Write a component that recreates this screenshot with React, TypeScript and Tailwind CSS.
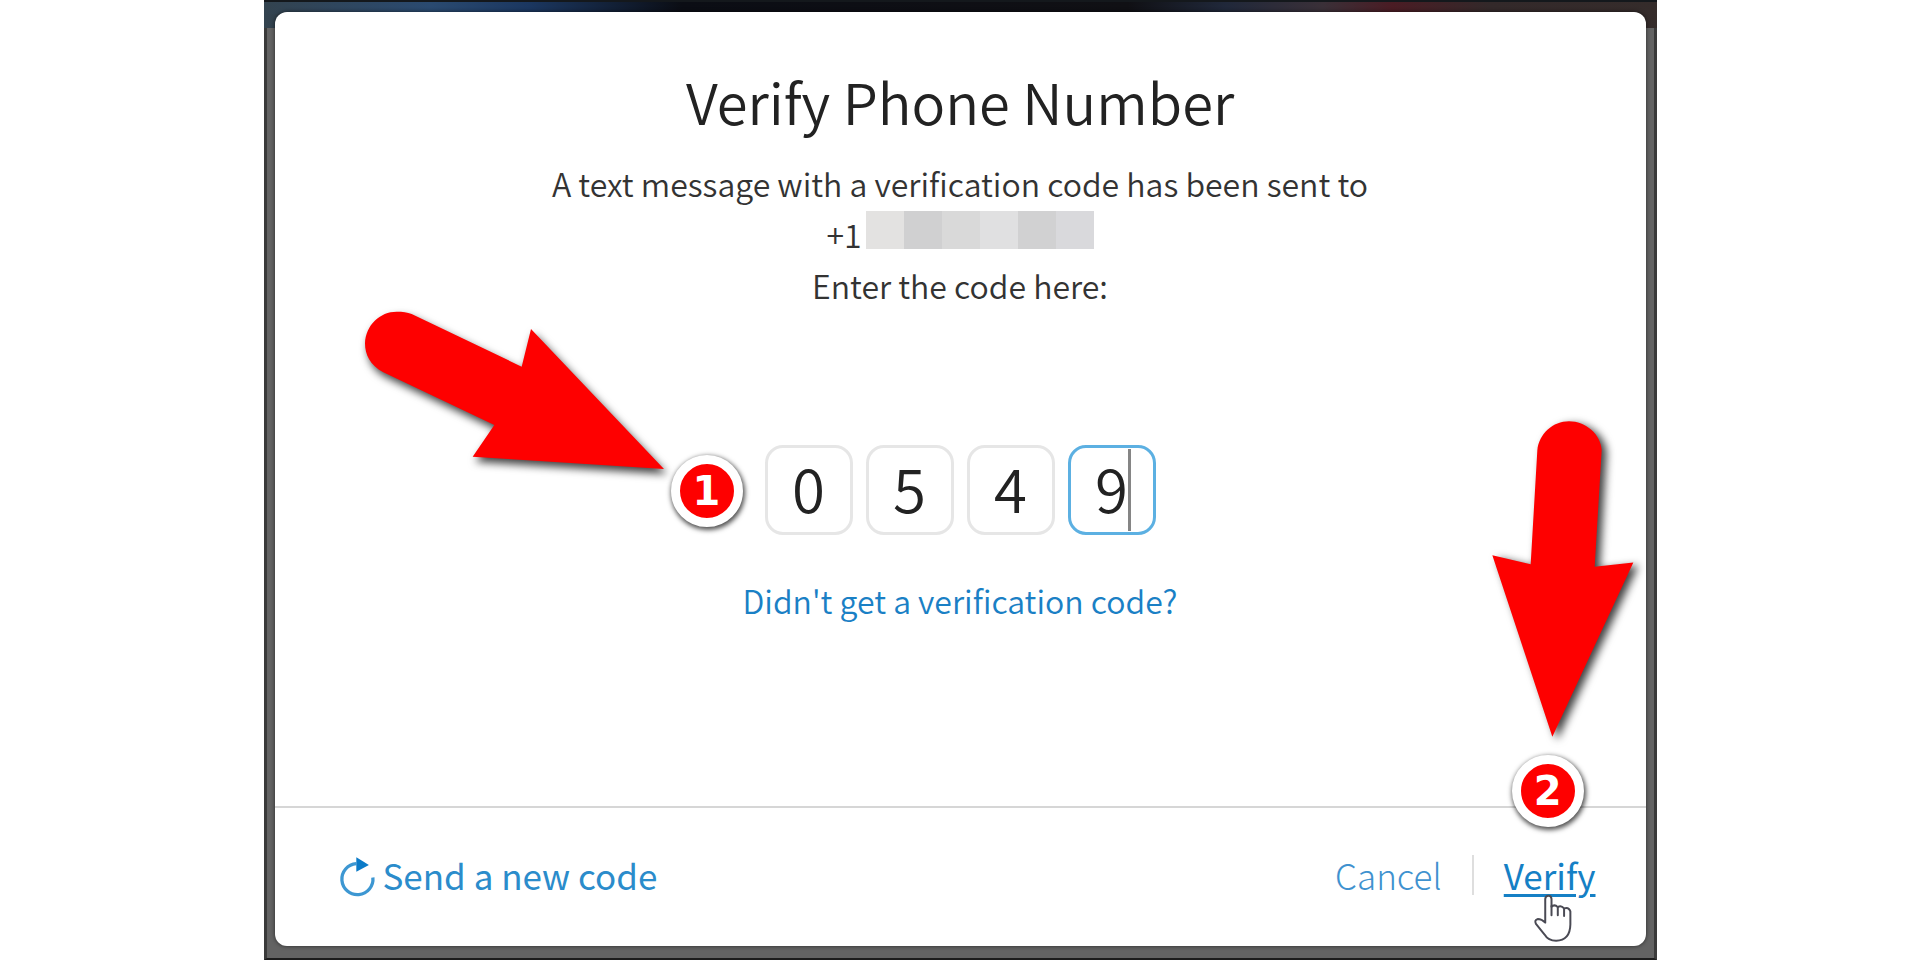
import React, { useState } from "react";

const MASK_COLORS = [
    "bg-[#e3e2e1]",
    "bg-[#d0d0d1]",
    "bg-[#d9d9d9]",
    "bg-[#e0e0e1]",
    "bg-[#d1d1d2]",
    "bg-[#d9d9dc]",
];

export default function App() {
    const [code, setCode] = useState(["0", "5", "4", "9"]);

    const handleChange = (index: number, value: string) => {
        setCode(code.map((digit, i) => (i === index ? value : digit)));
    };

    return (
        <div className="min-h-screen bg-white flex justify-center font-['Noto_Sans_CJK_SC','Open_Sans',sans-serif]">
            {/* Dimmed page behind the dialog */}
            <div className="relative w-full max-w-[1393px] flex flex-col px-2 pt-3 pb-3 bg-[#636363] border-x-3 border-b-2 border-x-[#3a3a3a] border-b-[#1c1c1c]">
                <div className="absolute -inset-x-[3px] top-0 h-7 border-t-2 border-[#14181c] bg-linear-to-r from-[#33434f] via-[#0d0f14] to-[#352c2b]">
                    <div className="h-3 bg-[linear-gradient(90deg,#33434f_0%,#2a4a70_12%,#1b3760_19%,#0b0d14_30%,#101014_62%,#20283a_69%,#3a3038_76%,#4a1c24_81%,#33292a_88%,#352c2b_100%)]" />
                </div>

                <div
                    role="dialog"
                    aria-labelledby="dialog-title"
                    className="relative flex-1 flex flex-col bg-white rounded-xl shadow-[0_0_4px_rgba(0,0,0,0.6)]">
                    <main className="flex-1 flex flex-col items-center pt-[53px] text-center">
                        <h1
                            id="dialog-title"
                            className="text-[56px] leading-[72px] font-[350] text-[#222]">
                            Verify Phone Number
                        </h1>
                        <div className="mt-[21px] text-[32px] leading-[51px] font-[350] text-[#333]">
                            <p>
                                A text message with a verification code has been
                                sent to
                            </p>
                            <p className="flex justify-center gap-1">
                                +1
                                <MaskedNumber />
                            </p>
                            <p>Enter the code here:</p>
                        </div>

                        <div className="relative mt-[134px] flex gap-[13px]">
                            {code.map((digit, i) => (
                                <CodeBox
                                    key={i}
                                    index={i}
                                    value={digit}
                                    active={i === 3}
                                    onChange={handleChange}
                                />
                            ))}
                            <svg
                                viewBox="0 0 1260 780"
                                className="absolute -left-[415px] -top-[155px] w-[420px] h-[260px] max-w-none overflow-visible pointer-events-none drop-shadow-[3px_5px_4px_rgba(0,0,0,0.75)]">
                                <path
                                    d="M185 72 L515 230 L543 117 L942 537 L368 500 L433 405 L100 247 C60 226 45 194 45 160 C47 105 90 65 140 65 C158 65 172 66 185 72Z"
                                    fill="#fe0000"
                                />
                            </svg>
                            <StepBadge
                                step={1}
                                className="-left-[94px] top-[10px]"
                            />
                        </div>

                        <a
                            href="#resend"
                            className="mt-[45px] text-[32px] leading-10 font-[350] text-[#1a80c5]">
                            Didn't get a verification code?
                        </a>
                    </main>

                    <footer className="h-[140px] border-t-2 border-[#d6d6d6] flex items-center justify-between pl-[62px] pr-[50px] pb-1 text-[35px] leading-[48px]">
                        <button
                            type="button"
                            className="flex items-center gap-[6px] text-[#2b8ccb]">
                            <RefreshIcon />
                            Send a new code
                        </button>
                        <div className="flex items-center">
                            <button
                                type="button"
                                className="font-light text-[#3f92cf]">
                                Cancel
                            </button>
                            <span className="mx-[30px] h-10 w-[2px] bg-[#dedede]" />
                            <div className="relative">
                                <button
                                    type="button"
                                    className="text-[#1580c5] underline decoration-3 underline-offset-4">
                                    Verify
                                </button>
                                <svg
                                    viewBox="0 0 630 1100"
                                    className="absolute -left-[45px] bottom-[132px] w-[210px] h-[367px] max-w-none overflow-visible pointer-events-none drop-shadow-[5px_3px_4px_rgba(0,0,0,0.75)]">
                                    <path
                                        d="M235 150 C240 100 282 63 330 63 C380 63 426 102 428 150 L407 500 L523 487 L280 1010 L100 465 L215 492Z"
                                        fill="#fe0000"
                                    />
                                </svg>
                                <StepBadge
                                    step={2}
                                    className="left-2 -top-24"
                                />
                                <HandCursor />
                            </div>
                        </div>
                    </footer>
                </div>
            </div>
        </div>
    );
}

// Pixelated block that hides the phone number
function MaskedNumber() {
    return (
        <span className="mt-[2px] flex h-[38px]" aria-hidden="true">
            {MASK_COLORS.map((color, i) => (
                <span key={i} className={`w-[38px] ${color}`} />
            ))}
        </span>
    );
}

function CodeBox({
    index,
    value,
    active,
    onChange,
}: {
    index: number;
    value: string;
    active: boolean;
    onChange: (index: number, value: string) => void;
}) {
    return (
        <div className="relative">
            <input
                type="text"
                inputMode="numeric"
                maxLength={1}
                aria-label={`Digit ${index + 1}`}
                value={value}
                onChange={(e) => onChange(index, e.target.value)}
                className={`block w-[88px] h-[90px] pb-2 rounded-[18px] border-3 bg-white text-center text-[60px] leading-[72px] font-[350] text-[#222] outline-none ${
                    active ? "border-[#5cb0e2]" : "border-[#e6e6e6]"
                }`}
            />
            {active && (
                <span className="absolute left-[60px] inset-y-1 w-[3px] bg-[#858585]" />
            )}
        </div>
    );
}

function StepBadge({ step, className }: { step: number; className: string }) {
    return (
        <span
            className={`absolute flex items-center justify-center size-[72px] rounded-full border-[9px] border-white bg-[#fe0000] text-white font-['DejaVu_Sans',sans-serif] font-bold text-[40px] leading-none pointer-events-none shadow-[1px_2px_5px_1px_rgba(0,0,0,0.7)] ${className}`}>
            {step}
        </span>
    );
}

function RefreshIcon() {
    return (
        <svg
            viewBox="260 232 120 124"
            className="w-10 h-[41px] overflow-visible"
            fill="none">
            <path
                d="M318 258 A47 47 0 1 0 368 300"
                stroke="#3d97d2"
                strokeWidth="10"
            />
            <path d="M318 239 L356 262 L318 283Z" fill="#0c7bc8" />
        </svg>
    );
}

function HandCursor() {
    return (
        <svg
            viewBox="635 335 130 150"
            className="absolute left-[28px] top-[42px] w-[43px] h-[50px] max-w-none pointer-events-none">
            <path
                d="M675 420 V352 Q676 343 685 343 Q693 343 694 352 V376 Q703 367 713 377 Q723 370 732 381 Q746 376 751 390 V430 Q750 478 708 479 Q684 479 673 460 L647 428 Q641 416 653 413 Q664 413 675 424Z"
                fill="#fff"
                stroke="#4a4a54"
                strokeWidth="6"
                strokeLinejoin="round"
            />
            <path
                d="M694 374 V402 M713 378 V402 M732 383 V404"
                stroke="#4a4a54"
                strokeWidth="6"
                strokeLinecap="round"
            />
        </svg>
    );
}
